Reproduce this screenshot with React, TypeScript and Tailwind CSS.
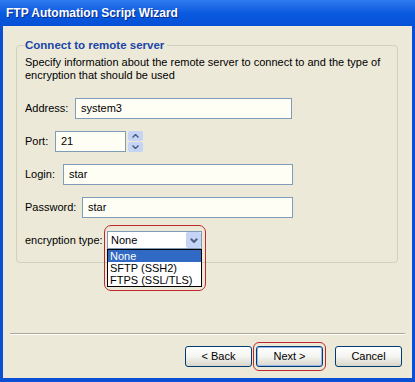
import React from "react";

const font = "font-['Liberation_Sans','Tahoma',sans-serif]";

function Field({label, value, labelClass, inputClass}: {label: string; value: string; labelClass: string; inputClass: string}) {
    return (
        <div className="flex items-center h-[20px]">
            <span className={labelClass}>{label}</span>
            <div className={`h-[21px] border border-[#7f9db9] bg-[#fffef5] flex items-center px-[5px] ${inputClass}`}>
                {value}
            </div>
        </div>
    );
}

function XpButton({children, className = ""}: {children: React.ReactNode; className?: string}) {
    return (
        <div
            className={`w-[67px] h-[21px] rounded-[3px] border border-[#003c74] bg-gradient-to-b from-[#ffffff] via-[#f4f4f0] to-[#d8d6cc] flex items-center justify-center text-black ${className}`}
        >
            {children}
        </div>
    );
}

export default function App() {
    return (
        <div className={`w-[415px] h-[382px] flex flex-col bg-[#0a4fd4] text-[11px] text-black ${font}`}>
            {/* title bar */}
            <div className="h-[26px] shrink-0 flex items-center pl-[6px] bg-gradient-to-b from-[#2f7bf0] via-[#0a5ae0] to-[#0650d6]">
                <span className="text-white font-bold text-[12px] [text-shadow:1px_1px_0_#0a2a8a]">
                    FTP Automation Script Wizard
                </span>
            </div>

            {/* client area */}
            <div className="flex-1 mx-[3px] mb-[4px] bg-[#ece9d8] flex flex-col">
                {/* group box */}
                <div className="relative mt-[19px] ml-[13px] mr-[14px] h-[218px] border border-[#d0d0bf] rounded-[4px] pl-[8px]">
                    <div className="-mt-[8px] w-fit bg-[#ece9d8] pr-[3px] font-bold text-[#1b45a8] text-[11.5px] leading-[14px]">
                        Connect to remote server
                    </div>
                    <div className="mt-[4px] leading-[13px] pr-[2px]">
                        Specify information about the remote server to connect to and the type of encryption that should be used
                    </div>

                    <div className="mt-[16px] flex flex-col gap-[13px]">
                        <Field label="Address:" value="system3" labelClass="w-[50px]" inputClass="w-[217px]"/>
                        <div className="flex items-center h-[20px]">
                            <span className="w-[30px]">Port:</span>
                            <div className="w-[71px] h-[21px] border border-[#7f9db9] bg-[#fffef5] flex items-center px-[5px]">
                                21
                            </div>
                            <div className="ml-[2px] w-[15px] h-[21px] flex flex-col gap-[1px]">
                                <div className="flex-1 rounded-[2px] bg-[#c5d4f4] flex items-center justify-center">
                                    <svg width="7" height="4" viewBox="0 0 7 4"><path d="M0.5 3.5 L3.5 0.5 L6.5 3.5" stroke="#4d6185" strokeWidth="1.5" fill="none"/></svg>
                                </div>
                                <div className="flex-1 rounded-[2px] bg-[#c5d4f4] flex items-center justify-center">
                                    <svg width="7" height="4" viewBox="0 0 7 4"><path d="M0.5 0.5 L3.5 3.5 L6.5 0.5" stroke="#4d6185" strokeWidth="1.5" fill="none"/></svg>
                                </div>
                            </div>
                        </div>
                        <Field label="Login:" value="star" labelClass="w-[38px]" inputClass="w-[230px]"/>
                        <Field label="Password:" value="star" labelClass="w-[57px]" inputClass="w-[211px]"/>
                        <div className="flex items-center h-[20px]">
                            <span className="w-[82px]">encryption type:</span>
                            <div className="relative">
                                <div className="w-[95px] h-[18px] border border-[#7f9db9] bg-white flex items-center pl-[3px]">
                                    <span className="flex-1">None</span>
                                    <div className="w-[15px] h-[16px] rounded-[2px] bg-[#c5d4f4] flex items-center justify-center">
                                        <svg width="8" height="5" viewBox="0 0 8 5"><path d="M0.8 0.8 L4 4 L7.2 0.8" stroke="#4d6185" strokeWidth="2" fill="none"/></svg>
                                    </div>
                                </div>
                                {/* open list */}
                                <div className="absolute left-0 top-[18px] w-[95px] border border-black bg-white flex flex-col z-10 leading-[12px]">
                                    <div className="bg-[#316ac5] text-white pl-[2px]">None</div>
                                    <div className="pl-[2px]">SFTP (SSH2)</div>
                                    <div className="pl-[2px]">FTPS (SSL/TLS)</div>
                                </div>
                                {/* highlight ring */}
                                <div className="absolute -left-[3px] -top-[6px] w-[102px] h-[66px] border border-[#c0272d] rounded-[7px] z-20"/>
                            </div>
                        </div>
                    </div>
                </div>

                {/* separator */}
                <div className="mt-auto mx-[7px] h-[2px] border-t border-[#aca899] border-b border-b-white"/>

                {/* buttons */}
                <div className="h-[43px] flex items-center justify-end gap-[4px] pr-[10px]">
                    <XpButton>&lt; Back</XpButton>
                    <div className="relative">
                        <XpButton className="shadow-[inset_0_0_0_1px_#9ab8ef]">Next &gt;</XpButton>
                        <div className="absolute -left-[3px] -top-[4px] w-[73px] h-[29px] border border-[#c0272d] rounded-[6px]"/>
                    </div>
                    <XpButton className="ml-[8px]">Cancel</XpButton>
                </div>
            </div>
        </div>
    );
}
